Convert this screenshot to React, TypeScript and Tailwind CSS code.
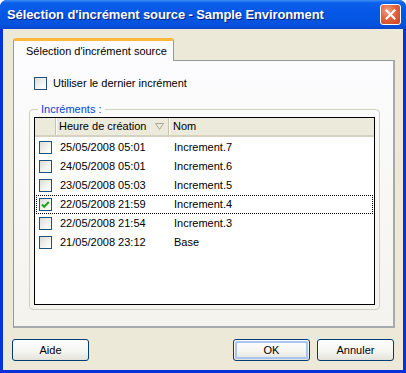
import React from "react";

const rows = [
  { d: "25/05/2008 05:01", n: "Increment.7", c: false },
  { d: "24/05/2008 05:01", n: "Increment.6", c: false },
  { d: "23/05/2008 05:03", n: "Increment.5", c: false },
  { d: "22/05/2008 21:59", n: "Increment.4", c: true },
  { d: "22/05/2008 21:54", n: "Increment.3", c: false },
  { d: "21/05/2008 23:12", n: "Base", c: false },
];

function XPCheck({ checked }: { checked?: boolean }) {
  return (
    <span className="w-[13px] h-[13px] border border-[#1C5180] bg-[linear-gradient(135deg,#DCDCD7_0%,#F4F4F0_60%,#FFFFFF_100%)] flex items-center justify-center shrink-0">
      {checked && (
        <svg width="11" height="11" viewBox="0 0 11 11">
          <polyline points="2,5.5 4.2,7.8 8.8,3" fill="none" stroke="#21A121" strokeWidth="2" />
        </svg>
      )}
    </span>
  );
}

function XPButton({ label, def }: { label: string; def?: boolean }) {
  return (
    <div className="w-[77px] h-[22px] rounded-[3px] border border-[#003C74] bg-[linear-gradient(180deg,#FFFFFF_0%,#F4F4F0_60%,#E3E2DA_100%)] flex items-center justify-center p-[1px]">
      <div
        className={
          def
            ? "w-full h-full rounded-[2px] border-2 border-[#A8C4F0] flex items-center justify-center"
            : "w-full h-full flex items-center justify-center"
        }
      >
        <span className="text-[11px] text-black leading-none">{label}</span>
      </div>
    </div>
  );
}

export default function App() {
  return (
    <div
      className="w-[406px] h-[373px] flex flex-col bg-[#0831D9] rounded-t-[7px] overflow-hidden"
      style={{ fontFamily: '"Liberation Sans", Arial, sans-serif' }}
    >
      {/* title bar */}
      <div className="h-[29px] shrink-0 flex items-center justify-between pl-[7px] pr-[5px] bg-[linear-gradient(180deg,#3D8EF5_0%,#0B5FE8_10%,#0357E6_45%,#0453DE_85%,#0B45CC_100%)]">
        <span className="text-white font-bold text-[13px] tracking-[-0.1px] [text-shadow:1px_1px_0_#0A1E7A]">
          Sélection d'incrément source - Sample Environment
        </span>
        <div className="w-[21px] h-[21px] rounded-[3px] border border-white bg-[radial-gradient(circle_at_35%_30%,#EEA487_0%,#E2633E_45%,#C8431F_100%)] flex items-center justify-center">
          <svg width="11" height="11" viewBox="0 0 11 11">
            <path d="M1.5 1.5 L9.5 9.5 M9.5 1.5 L1.5 9.5" stroke="white" strokeWidth="2" strokeLinecap="square" />
          </svg>
        </div>
      </div>

      {/* client */}
      <div className="flex-1 mx-[3px] mb-[3px] bg-[#ECE9D8] flex flex-col pt-[9px] px-[10px]">
        {/* tab header */}
        <div className="flex">
          <div className="relative z-10 w-[161px] h-[23px] -mb-[1px] rounded-t-[3px] border-t-[3px] border-t-[#FFB73C] border-x border-x-[#919B9C] bg-[#FCFCFE] flex items-center pl-[12px]">
            <span className="text-[11px] text-black">Sélection d'incrément source</span>
          </div>
        </div>
        {/* panel */}
        <div className="w-[382px] h-[268px] border border-[#919B9C] border-r-[2px] border-b-[2px] border-r-[#A5ABAC] border-b-[#A5ABAC] bg-[linear-gradient(180deg,#FCFCFE_0%,#F4F3EE_100%)] flex flex-col">
          <div className="flex items-center pl-[20px] pt-[16px] gap-[6px]">
            <XPCheck />
            <span className="text-[11px] text-black leading-[13px]">Utiliser le dernier incrément</span>
          </div>
          <fieldset className="mt-[13px] ml-[15px] mr-[13px] border border-[#D0D0BF] rounded-[4px] px-[4px] pb-[4px]">
            <legend className="ml-[4px] px-[3px] text-[11px] text-[#0046D5] leading-[13px]">Incréments :</legend>
            <div className="mt-[1px] h-[188px] border border-black bg-white flex flex-col">
              {/* header */}
              <div className="h-[19px] shrink-0 flex bg-[#EBEADB] border-b-2 border-b-[#D6D2C2] text-[11px] text-black">
                <div className="w-[21px] border-r border-r-[#C7C5B2]" />
                <div className="w-[113px] border-r border-r-[#C7C5B2] border-l border-l-white flex items-center justify-between pl-[2px] pr-[4px]">
                  <span>Heure de création</span>
                  <svg width="9" height="8" viewBox="0 0 9 8">
                    <path d="M0.5 0.5 L8.5 0.5 L4.5 6.5 Z" fill="none" stroke="#ACA899" />
                  </svg>
                </div>
                <div className="flex-1 border-l border-l-white flex items-center pl-[3px]">
                  <span>Nom</span>
                </div>
              </div>
              {/* rows */}
              <div className="flex flex-col pt-[1px]">
                {rows.map((r) => (
                  <div
                    key={r.d + r.n}
                    className={
                      "h-[19px] flex items-center text-[11px] text-black mx-[1px] " +
                      (r.c ? "border border-dotted border-black" : "border border-transparent")
                    }
                  >
                    <div className="w-[20px] pl-[2px] flex items-center">
                      <XPCheck checked={r.c} />
                    </div>
                    <div className="w-[114px] pl-[3px]">{r.d}</div>
                    <div className="flex-1 pl-[3px]">{r.n}</div>
                  </div>
                ))}
              </div>
            </div>
          </fieldset>
        </div>
        {/* buttons */}
        <div className="mt-[11px] flex items-center">
          <div className="-ml-[1px]">
            <XPButton label="Aide" />
          </div>
          <div className="flex-1" />
          <div className="flex gap-[7px] mr-[-1px]">
            <XPButton label="OK" def />
            <XPButton label="Annuler" />
          </div>
        </div>
      </div>
    </div>
  );
}
